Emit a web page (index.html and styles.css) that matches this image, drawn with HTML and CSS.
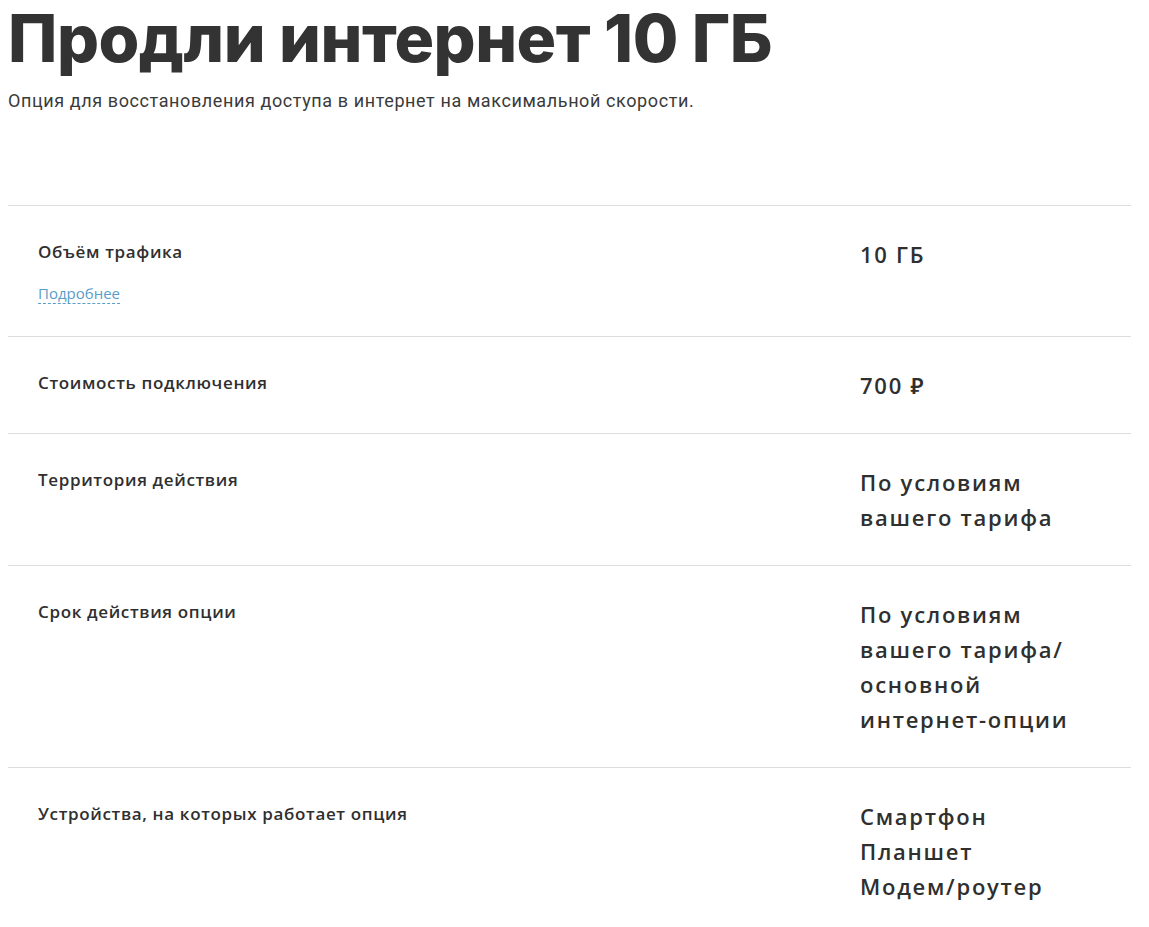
FILE: index.html
```html
<!DOCTYPE html>
<html lang="ru">
<head>
<meta charset="utf-8">
<title>Продли интернет 10 ГБ</title>
<link rel="stylesheet" href="styles.css">
</head>
<body>
<main class="page">
  <header class="intro">
    <h1 class="title">Продли интернет 10&nbsp;ГБ</h1>
    <p class="lead">Опция для восстановления доступа в интернет на максимальной скорости.</p>
  </header>
  <section class="specs">
    <div class="row">
      <div class="label">
        <div class="label-text">Объём трафика</div>
        <a class="more" href="#">Подробнее</a>
      </div>
      <div class="value">10 ГБ</div>
    </div>
    <div class="row">
      <div class="label"><div class="label-text">Стоимость подключения</div></div>
      <div class="value">700 ₽</div>
    </div>
    <div class="row">
      <div class="label"><div class="label-text">Территория действия</div></div>
      <div class="value">По условиям вашего тарифа</div>
    </div>
    <div class="row">
      <div class="label"><div class="label-text">Срок действия опции</div></div>
      <div class="value">По условиям вашего тарифа/ основной интернет-опции</div>
    </div>
    <div class="row">
      <div class="label"><div class="label-text">Устройства, на которых работает опция</div></div>
      <div class="value">Смартфон<br>Планшет<br>Модем/роутер</div>
    </div>
  </section>
</main>
</body>
</html>
```
FILE: styles.css
```css
html, body {
  margin: 0;
  padding: 0;
  background: #ffffff;
}
body {
  font-family: "Open Sans", "Noto Sans", Arial, sans-serif;
  color: #333333;
}
.page {
  padding: 0 18px 0 8px;
}
.intro {
  height: 205px;
}
.title {
  margin: 0;
  padding-top: 4px;
  font-family: Inter, "Liberation Sans", sans-serif;
  font-weight: 800;
  font-size: 66px;
  line-height: 68px;
  letter-spacing: -0.5px;
  color: #333333;
}
.lead {
  margin: 17px 0 0;
  font-family: Roboto, "Noto Sans", sans-serif;
  font-size: 18px;
  line-height: 24px;
  letter-spacing: 0.6px;
  color: #3a3a3a;
}
.specs {
  display: flex;
  flex-direction: column;
}
.row {
  display: grid;
  grid-template-columns: 1fr 228px;
  column-gap: 24px;
  border-top: 1px solid #dddddd;
  padding: 31px 43px 30px 30px;
}
.label-text {
  font-size: 17px;
  font-weight: 600;
  line-height: 30px;
  letter-spacing: 0.65px;
  color: #2f2f2f;
}
.more {
  display: inline-block;
  margin: 16px 0 2px;
  font-size: 15px;
  line-height: 20px;
  letter-spacing: 0;
  color: #5a9dc8;
  text-decoration: none;
  border-bottom: 1px dashed #5a9dc8;
}
.value {
  font-size: 22px;
  font-weight: 600;
  line-height: 35px;
  letter-spacing: 1.75px;
  color: #2f2f2f;
}
```
